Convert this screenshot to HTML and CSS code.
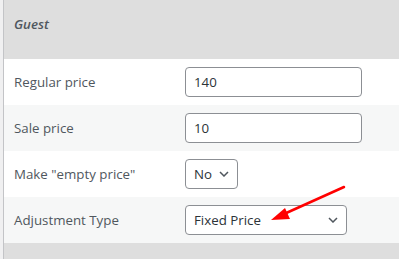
FILE: index.html
```html
<!DOCTYPE html>
<html>
<head>
<meta charset="utf-8">
<link rel="stylesheet" href="styles.css">
</head>
<body>
<div class="panel">
  <div class="head"><span class="title">Guest</span></div>
  <div class="row">
    <div class="label">Regular price</div>
    <div class="field"><div class="input wide">140</div></div>
  </div>
  <div class="row alt">
    <div class="label">Sale price</div>
    <div class="field"><div class="input wide">10</div></div>
  </div>
  <div class="row">
    <div class="label">Make "empty price"</div>
    <div class="field">
      <div class="input select small"><span>No</span>
        <svg class="chev" width="10" height="6" viewBox="0 0 10 6"><path d="M1 1 L5 5 L9 1" fill="none" stroke="#50575e" stroke-width="1.5"/></svg>
      </div>
    </div>
  </div>
  <div class="row alt">
    <div class="label">Adjustment Type</div>
    <div class="field">
      <div class="input select mid"><span>Fixed Price</span>
        <svg class="chev" width="10" height="6" viewBox="0 0 10 6"><path d="M1 1 L5 5 L9 1" fill="none" stroke="#50575e" stroke-width="1.5"/></svg>
      </div>
    </div>
  </div>
  <div class="foot"></div>
  <svg class="arrow" width="399" height="259" viewBox="0 0 399 259">
    <line x1="344" y1="187" x2="284" y2="214" stroke="#f00" stroke-width="2.5" stroke-linecap="round"/>
    <polygon points="271,220 285,208 290,219" fill="#f00"/>
  </svg>
</div>
</body>
</html>
```
FILE: styles.css
```css
html, body { margin: 0; padding: 0; }
body {
  background: #f0f0f1;
  font-family: "Open Sans", "Noto Sans", sans-serif;
  width: 399px;
  height: 259px;
  overflow: hidden;
}
.panel {
  position: relative;
  margin-left: 3px;
  border-left: 1px solid #c3c4c7;
  height: 259px;
  background: #fff;
}
.head {
  height: 59px;
  box-sizing: border-box;
  background: #dedede;
  padding: 12px 10px 0;
}
.title {
  font-style: italic;
  font-weight: 600;
  font-size: 13.3px;
  color: #50575e;
}
.row {
  height: 46px;
  display: grid;
  grid-template-columns: 181px 1fr;
  align-items: center;
  background: #fff;
}
.row.alt { background: #f6f7f7; }
.label {
  padding-left: 10px;
  font-size: 13.3px;
  color: #50575e;
}
.field { display: flex; align-items: center; }
.input {
  box-sizing: border-box;
  height: 30px;
  border: 1px solid #8c8f94;
  border-radius: 4px;
  background: #fff;
  padding: 0 8px;
  font-size: 13.3px;
  color: #2c3338;
  display: flex;
  align-items: center;
}
.wide { width: 177px; }
.select { justify-content: space-between; padding-right: 8px; }
.small { width: 53px; }
.mid { width: 162px; }
.chev { display: block; }
.foot {
  height: 16px;
  background: #dedede;
}
.arrow {
  position: absolute;
  left: -4px;
  top: 0;
  pointer-events: none;
}
```
